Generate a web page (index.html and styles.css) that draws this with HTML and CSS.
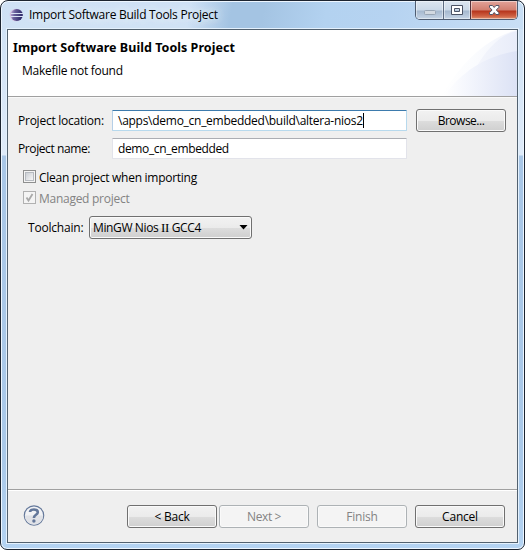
FILE: index.html
```html
<!DOCTYPE html>
<html lang="en">
<head>
<meta charset="utf-8">
<title>Import Software Build Tools Project</title>
<link rel="stylesheet" href="styles.css">
</head>
<body>
<div class="window">
  <div class="titlebar">
    <svg class="app-icon" width="16" height="16" viewBox="0 0 16 16">
      <defs>
        <linearGradient id="orb" x1="0" x2="1" y1="0" y2="0.2"><stop offset="0" stop-color="#c9b3df"/><stop offset=".38" stop-color="#695f9b"/><stop offset="1" stop-color="#2c2868"/></linearGradient>
      </defs>
      <circle cx="7" cy="7" r="6.3" fill="#d7c4e2"/>
      <circle cx="7.8" cy="7" r="6.1" fill="url(#orb)"/>
      <path d="M2 5.500h12M1.600 8.500h12.400" stroke="#dbe2f5" stroke-width="1"/>
    </svg>
    <span class="title t-title">Import Software Build Tools Project</span>
    <div class="controls">
      <span class="ctl min"><svg width="29" height="19" viewBox="0 0 29 19"><rect x="8.500" y="9.500" width="11" height="4" rx="1" fill="#d2d9e1" stroke="#98a5b4"/></svg></span>
      <span class="ctl max"><svg width="26" height="19" viewBox="0 0 26 19"><path fill-rule="evenodd" d="M7.500 4.500h11v9h-11zM10.500 7.500h5v3h-5z" fill="#fff" stroke="#4b5365"/></svg></span>
      <span class="ctl close"><svg width="46" height="19" viewBox="0 0 46 19"><path d="M18.500 4.500h3l1.700 2 1.700-2h3v1.800l-2.600 2.700 2.600 2.700v1.800h-3l-1.700-2-1.700 2h-3v-1.800l2.600-2.700-2.600-2.700z" fill="#fff" stroke="#535566"/></svg></span>
    </div>
  </div>
  <main class="client">
    <header class="banner">
      <div class="banner-text">
        <h1 class="t-head">Import Software Build Tools Project</h1>
        <p class="t-sub">Makefile not found</p>
      </div>
      <svg class="swoosh" width="76" height="66" viewBox="0 0 76 66">
        <defs>
          <linearGradient id="s1"><stop offset="0" stop-color="#fff"/><stop offset=".4" stop-color="#fbfcfe"/><stop offset="1" stop-color="#f1f4fc"/></linearGradient>
          <linearGradient id="s2" gradientUnits="userSpaceOnUse" x1="3" x2="76" y1="0" y2="0"><stop offset="0" stop-color="#fff"/><stop offset=".3" stop-color="#f5f7fd"/><stop offset="1" stop-color="#dce2f5"/></linearGradient>
          <linearGradient id="s3"><stop offset="0" stop-color="#f4f6fc"/><stop offset="1" stop-color="#e8ecf9"/></linearGradient>
        </defs>
        <path d="M0 66C20 34 43 9 76 0V66z" fill="url(#s1)"/>
        <path d="M35 38C44 21 59 4 76 1V36z" fill="url(#s3)"/>
        <path d="M3 66C22 40 46 26 76 21V66z" fill="url(#s2)"/>
      </svg>
    </header>
    <section class="form">
      <div class="row location">
        <label class="t-loc">Project location:</label>
        <div class="field focused"><span class="t-path">\apps\demo_cn_embedded\build\altera-nios2</span><i class="caret"></i></div>
        <div class="btn browse"><span class="t-browse">Browse...</span></div>
      </div>
      <div class="row name">
        <label class="t-name">Project name:</label>
        <div class="field"><span class="t-demo">demo_cn_embedded</span></div>
      </div>
      <div class="check clean"><span class="box"><i></i></span><span class="t-clean">Clean project when importing</span></div>
      <div class="check managed"><span class="box"><svg width="11" height="11" viewBox="0 0 11 11"><path d="M2.500 5.500l2 3L8.500 2" fill="none" stroke="#a9a9a9" stroke-width="1.800"/></svg></span><span class="t-managed">Managed project</span></div>
      <div class="row chain">
        <label class="t-chain">Toolchain:</label>
        <div class="btn combo"><span class="t-gcc">MinGW Nios <span class="numeral">II</span> GCC4</span><svg width="9" height="5" viewBox="0 0 9 5"><path d="M.5 0h8l-4 4.500z"/></svg></div>
      </div>
    </section>
    <footer class="footer">
      <svg class="help" width="22" height="22" viewBox="0 0 22 22">
        <circle cx="11" cy="10.500" r="9.700" fill="#f1f2f5" stroke="#65799b" stroke-width="1.200"/>
        <path d="M1.800 10.500a9.200 9.200 0 0 0 18.400 0z" fill="#e0e2e7"/>
        <path d="M7 7C7.200 3.600 14.800 3.500 14.800 7.200c0 2.700-3.900 2.500-3.900 5.700" fill="none" stroke="#63779a" stroke-width="2.600"/>
        <circle cx="10.900" cy="16" r="1.700" fill="#63779a"/>
      </svg>
      <div class="btn"><span class="t-back">&lt; Back</span></div>
      <div class="btn off next"><span class="t-next">Next &gt;</span></div>
      <div class="btn off finish"><span class="t-finish">Finish</span></div>
      <div class="btn cancel"><span class="t-cancel">Cancel</span></div>
    </footer>
  </main>
</div>
</body>
</html>
```
FILE: styles.css
```css
* { box-sizing: border-box; }
html, body { margin: 0; width: 525px; height: 550px; overflow: hidden; background: #fff; }
body { font: 12px/16px "Open Sans", "Noto Sans", sans-serif; color: #000; }
span, label, h1, p { white-space: nowrap; }
h1, p { margin: 0; }

.window {
  width: 525px; height: 550px;
  padding: 0 6px 6px;
  border: 1px solid #1c2430;
  border-radius: 8px 8px 7px 7px;
  box-shadow: inset 0 0 0 1px #edf6ff;
  background:
    linear-gradient(100deg, transparent 36%, #a4c4e3 44%, #a4c4e3 50%, #b3d2f0 62%, #b6d3f1 74%, #c9dff5 100%) 0 0 / 100% 28px no-repeat,
    linear-gradient(#cfe1f5 0, #d0e2f5 28px, #dfebf9 154px, #a9c7e7 155px, #aac9e9 460px, #b4d3f2 100%);
}
.titlebar { display: flex; align-items: flex-start; height: 28px; position: relative; }
.app-icon { margin: 7px 0 0 2px; }
.title { margin: 6px 0 0 4px; text-shadow: 0 0 8px #e8f2fd, 0 0 8px #e8f2fd; }
.controls {
  position: absolute; top: 0; left: 408px;
  display: flex; width: 103px; height: 19px;
  border: 1px solid #4e5c71; border-top: 0;
  border-radius: 0 0 5px 5px; overflow: hidden;
}
.ctl { height: 18px; box-shadow: inset 0 0 0 1px rgba(255,255,255,.45); background: linear-gradient(#dce6f0, #cbd9e8 9px, #a5b8ce 10px, #c6d5e6); }
.ctl svg { display: block; }
.min { width: 28px; border-right: 1px solid #5c6b80; }
.max { width: 27px; border-right: 1px solid #55323b; }
.close { flex: 1; background: linear-gradient(#e2a39a, #d17f70 9px, #b6351c 10px, #ce6042 15px, #df9270); }

.client {
  display: flex; flex-direction: column;
  width: 511px; height: 514px;
  border: 1px solid #52616f;
  box-shadow: 0 0 0 1px #e4f1fd;
  background: #efefef;
}
.banner { display: flex; height: 67px; background: #fff; border-bottom: 1px solid #a0a0a0; box-shadow: 0 1px #f9f9f9; }
.banner-text { flex: 1; }
.swoosh { flex: none; }
h1 { margin: 10px 0 0 5px; font: bold 12.5px/16px "Noto Sans", sans-serif; letter-spacing: .04px; }
.t-sub { margin: 7px 0 0 14px; }

.form { flex: 1; padding-top: 12px; }
.row { display: flex; }
.row label { width: 94px; margin-left: 10px; line-height: 21px; }
.location { height: 23px; }
.location .field { margin-top: 1px; }
.location label { margin-top: 1px; }
.field { display: flex; width: 295px; height: 21px; padding-left: 5px; line-height: 20px; background: #fff; border: 1px solid #e2e3ea; border-top-color: #abadb3; border-radius: 1px; }
.focused { border-color: #a4c9e3 #b7d9ed #b7d9ed #b5cfe7; border-top-color: #3d7bad; }
.caret { width: 1px; height: 15px; margin: 2px 0 0; background: #000; }
.name { margin-top: 6px; height: 21px; }
.name label { line-height: 22px; }
.check { display: flex; height: 13px; margin-left: 15px; }
.check > span:last-child { margin-left: 3px; line-height: 15px; }
.box { width: 13px; height: 13px; border: 1px solid #8e8f8f; background: #f4f4f4; }
.box svg { display: block; }
.box i { display: block; width: 9px; height: 9px; margin: 1px; border: 1px solid #b6bac0; background: linear-gradient(135deg, #cbcfd5, #f6f6f6); }
.clean { margin-top: 11px; }
.managed { margin-top: 8px; color: #838383; }
.managed .box { border-color: #b1b1b1; }
.chain { margin-top: 12px; }
.chain label { width: 61px; margin-left: 20px; line-height: 24px; }

.t-title { letter-spacing: -.26px; }
.t-sub { letter-spacing: -.28px; }
.t-loc { letter-spacing: -.24px; }
.t-name { letter-spacing: -.4px; }
.t-path { letter-spacing: -.27px; }
.t-demo { letter-spacing: -.37px; }
.t-clean, .t-managed { letter-spacing: -.27px; }
.t-chain { letter-spacing: -.2px; }
.t-gcc { letter-spacing: -.38px; }
.numeral { font-family: "Liberation Serif", serif; font-size: 13px; line-height: 1; }
.t-browse { letter-spacing: -.5px; }
.t-back, .t-finish, .t-cancel { letter-spacing: -.22px; }
.t-next { letter-spacing: -.4px; }

.btn {
  display: flex; justify-content: center;
  width: 90px; height: 23px; line-height: 22px;
  border: 1px solid #707070; border-radius: 3px;
  box-shadow: inset 0 0 0 1px #fafafa;
  background: linear-gradient(#f2f2f2, #ebebeb 50%, #dddddd 51%, #cfcfcf);
}
.browse { margin-left: 9px; }
.combo { width: 163px; justify-content: space-between; align-items: center; padding: 0 3px 0 3px; }
.off { color: #838383; border-color: #adb2b5; background: #f4f4f4; }

.footer { display: flex; height: 53px; padding: 15px 0 0 15px; border-top: 1px solid #a0a0a0; box-shadow: inset 0 1px #fff; }
.help { margin-right: 82px; }
.footer > * { flex: none; }
.next { margin-left: 2px; }
.finish, .cancel { margin-left: 8px; }
```
